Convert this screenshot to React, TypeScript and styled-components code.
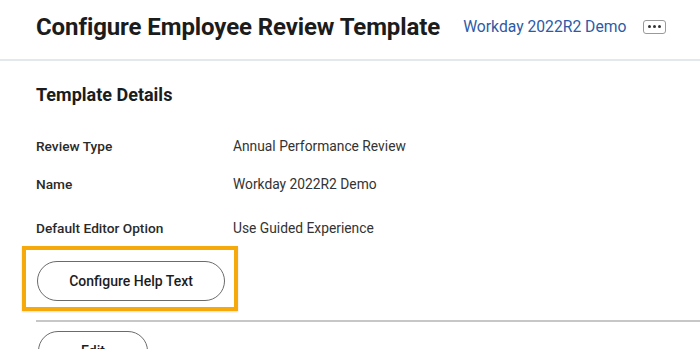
import React from "react";
import styled, { createGlobalStyle } from "styled-components";

const Global = createGlobalStyle`
  html, body { margin: 0; padding: 0; background: #ffffff; }
  body { font-family: Roboto, "Liberation Sans", Arial, sans-serif; color: #1f1f1f; overflow: hidden; }
  * { box-sizing: border-box; }
`;

const Page = styled.div`
  width: 700px;
  height: 349px;
  overflow: hidden;
  background: #fff;
`;

const Header = styled.header`
  display: flex;
  align-items: center;
  height: 61px;
  padding: 0 0 0 36px;
  border-bottom: 2px solid #e3e8eb;
`;

const Title = styled.h1`
  margin: 0;
  font-size: 24px;
  font-weight: 700;
  color: #1c1c1c;
  letter-spacing: -0.1px;
  padding-bottom: 6px;
`;

const HeaderLink = styled.a`
  margin-left: 23px;
  font-size: 15.7px;
  color: #2c5ba6;
  text-decoration: none;
  padding-bottom: 6px;
`;

const MoreButton = styled.button`
  margin-left: 17px;
  margin-bottom: 6px;
  width: 23px;
  height: 14px;
  border: 1.5px solid #9a9a9a;
  border-radius: 3px;
  background: #fff;
  display: flex;
  align-items: center;
  justify-content: center;
  gap: 2px;
  padding: 0;
`;

const Dot = styled.span`
  width: 3px;
  height: 3px;
  border-radius: 50%;
  background: #333;
`;

const Content = styled.section`
  padding-left: 36px;
`;

const SectionTitle = styled.h2`
  margin: 24px 0 0;
  font-size: 18px;
  font-weight: 700;
  color: #1c1c1c;
  line-height: 20px;
`;

const Fields = styled.div`
  display: grid;
  grid-template-columns: 197px 1fr;
  margin-top: 32px;
`;

const Label = styled.div<{ $h: number }>`
  height: ${(p) => p.$h}px;
  font-size: 13.7px;
  font-weight: 500;
  color: #2a2a2a;
  line-height: 18px;
`;

const Value = styled.div<{ $h: number }>`
  height: ${(p) => p.$h}px;
  font-size: 13.8px;
  color: #333;
  line-height: 18px;
`;

const Highlight = styled.div`
  display: inline-block;
  margin-left: -14px;
  margin-top: 9px;
  border: 4px solid #f6a90a;
  padding: 11px 9px 6px 11px;
  box-shadow: 0 1px 2px rgba(0,0,0,0.15);
`;

const PillButton = styled.button<{ $w: number }>`
  width: ${(p) => p.$w}px;
  height: 40px;
  border: 1.5px solid #6b6b6b;
  border-radius: 20px;
  background: #fff;
  font-family: Roboto, "Liberation Sans", Arial, sans-serif;
  font-size: 14px;
  font-weight: 500;
  color: #1c1c1c;
  padding: 0;
  display: block;
`;

const Divider = styled.hr`
  margin: 9px 0 0;
  border: none;
  border-top: 2px solid #c7c7c7;
`;

const Footer = styled.div`
  padding: 9px 0 0 2px;
`;

const fields: [string, string, number][] = [
  ["Review Type", "Annual Performance Review", 38],
  ["Name", "Workday 2022R2 Demo", 44],
  ["Default Editor Option", "Use Guided Experience", 18],
];

export default function App() {
  return (
    <Page>
      <Global />
      <Header>
        <Title>Configure Employee Review Template</Title>
        <HeaderLink href="#">Workday 2022R2 Demo</HeaderLink>
        <MoreButton aria-label="More">
          <Dot />
          <Dot />
          <Dot />
        </MoreButton>
      </Header>
      <Content>
        <SectionTitle>Template Details</SectionTitle>
        <Fields>
          {fields.map(([l, v, h]) => (
            <React.Fragment key={l}>
              <Label $h={h}>{l}</Label>
              <Value $h={h}>{v}</Value>
            </React.Fragment>
          ))}
        </Fields>
        <Highlight>
          <PillButton $w={188}>Configure Help Text</PillButton>
        </Highlight>
        <Divider />
        <Footer>
          <PillButton $w={110}>Edit</PillButton>
        </Footer>
      </Content>
    </Page>
  );
}
